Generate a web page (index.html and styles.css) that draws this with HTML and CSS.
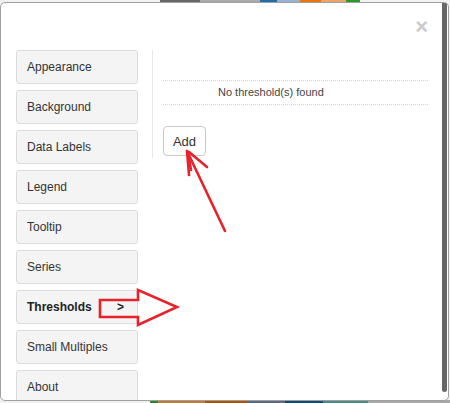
FILE: index.html
```html
<!DOCTYPE html>
<html lang="en">
<head>
<meta charset="utf-8">
<title>Settings</title>
<link rel="stylesheet" href="styles.css">
</head>
<body>
<div class="dialog">
  <div class="main">
    <div class="header"><span class="close">&times;</span></div>
    <div class="content-row">
      <nav class="nav">
        <div class="nav-item">Appearance</div>
        <div class="nav-item">Background</div>
        <div class="nav-item">Data Labels</div>
        <div class="nav-item">Legend</div>
        <div class="nav-item">Tooltip</div>
        <div class="nav-item">Series</div>
        <div class="nav-item active"><span>Thresholds</span><span class="chev">&gt;</span></div>
        <div class="nav-item">Small Multiples</div>
        <div class="nav-item">About</div>
      </nav>
      <section class="panel">
        <div class="empty-row">No threshold(s) found</div>
        <button class="add-btn">Add</button>
      </section>
    </div>
  </div>
  <div class="scroll-track"><div class="scroll-thumb"></div></div>
</div>
<svg class="annotations" width="450" height="403" viewBox="0 0 450 403">
  <g fill="none" stroke="#e8222b" stroke-width="2.6" stroke-linecap="round">
    <line x1="225" y1="231" x2="187" y2="151"/>
    <line x1="187" y1="151" x2="189" y2="175"/>
    <line x1="189" y1="152" x2="207" y2="167"/>
    <line x1="188" y1="153" x2="191" y2="170"/>
  </g>
  <polygon points="100,300 138,300 138,290 177,307 138,325 138,317 100,317" fill="none" stroke="#e8222b" stroke-width="2.6" stroke-linejoin="miter"/>
</svg>
</body>
</html>
```

FILE: styles.css
```css
html, body {
  margin: 0;
  padding: 0;
}

body {
  position: relative;
  width: 450px;
  height: 403px;
  overflow: hidden;
  font-family: "Liberation Sans", Arial, sans-serif;
  background:
    linear-gradient(to right, #f1f1f1 0 160px, #666 160px 200px, #aaa 200px 260px, #1f6ea6 260px 277px, #98b1cf 277px 300px, #e8770e 300px 321px, #eaa56c 321px 346px, #2a9a2a 346px 360px, #f1f1f1 360px) top left / 100% 3px no-repeat,
    linear-gradient(to right, #f1f1f1 0 150px, #2a8a2a 150px 158px, #c87b2e 158px 205px, #b35400 205px 247px, #5b6d86 247px 285px, #0f4a74 285px 323px, #4b8b8c 323px 368px, #a8a8a8 368px) bottom left / 100% 3px no-repeat,
    #f1f1f1;
}

.dialog {
  margin-top: 2px;
  width: 449px;
  height: 399px;
  box-sizing: border-box;
  border: 1px solid #a0a0a0;
  border-radius: 5px;
  background: #fff;
  display: flex;
  overflow: hidden;
}

.main {
  flex: 1;
  display: flex;
  flex-direction: column;
  min-width: 0;
}

.header {
  flex: none;
  height: 47px;
  box-sizing: border-box;
  display: flex;
  justify-content: flex-end;
  align-items: flex-start;
  padding: 13px 14px 0 0;
}

.close {
  font-size: 22px;
  line-height: 22px;
  font-weight: bold;
  color: #cbcbcb;
}

.content-row {
  flex: none;
  display: flex;
  align-items: flex-start;
  padding-left: 15px;
}

.nav {
  width: 122px;
  flex: none;
  display: flex;
  flex-direction: column;
  gap: 6px;
}

.nav-item {
  height: 34px;
  box-sizing: border-box;
  border: 1px solid #dcdcdc;
  border-radius: 3px;
  background: #f4f4f4;
  padding: 0 13px 0 10px;
  display: flex;
  align-items: center;
  justify-content: space-between;
  font-size: 12px;
  color: #333;
}

.nav-item.active {
  font-weight: bold;
  color: #222;
}

.panel {
  flex: 1;
  margin-left: 14px;
  border-left: 1px solid #e8e8e8;
  padding: 30px 14px 2px 10px;
}

.empty-row {
  border-top: 1px dotted #d4d4d4;
  border-bottom: 1px dotted #d4d4d4;
  height: 23px;
  line-height: 23px;
  padding-left: 55px;
  font-size: 11px;
  color: #444;
}

.add-btn {
  display: block;
  margin-top: 21px;
  width: 43px;
  height: 30px;
  padding: 0;
  box-sizing: border-box;
  border: 1px solid #c8c8c8;
  border-radius: 4px;
  background: #fff;
  font-family: "Liberation Sans", Arial, sans-serif;
  font-size: 13px;
  color: #333;
}

.scroll-track {
  width: 6px;
  flex: none;
}

.scroll-thumb {
  width: 5px;
  height: 389px;
  background: #666;
  border-radius: 0 0 3px 3px;
}

.annotations {
  position: absolute;
  top: 0;
  left: 0;
  pointer-events: none;
}
```
